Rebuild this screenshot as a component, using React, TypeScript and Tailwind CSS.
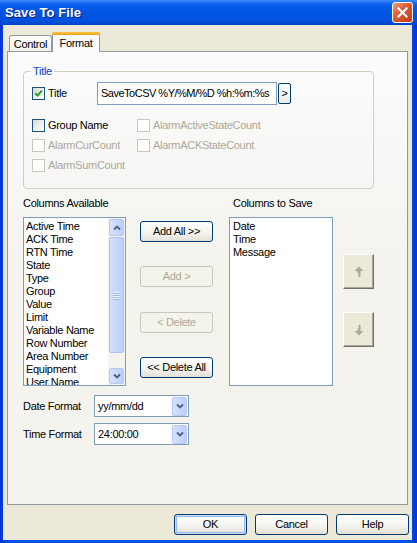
import React from 'react';
import clsx from 'clsx';

const availableCols = [
  'Active Time',
  'ACK Time',
  'RTN Time',
  'State',
  'Type',
  'Group',
  'Value',
  'Limit',
  'Variable Name',
  'Row Number',
  'Area Number',
  'Equipment',
  'User Name',
];

const savedCols = ['Date', 'Time', 'Message'];

function Check({ checked, disabled }: { checked?: boolean; disabled?: boolean }) {
  return (
    <span
      className={clsx(
        'w-[13px] h-[13px] border flex items-center justify-center shrink-0',
        disabled
          ? 'border-[#cac8bb] bg-white'
          : 'border-[#1c5180] bg-[linear-gradient(135deg,#d8d8d2,#f6f6f3_70%,#ffffff)]'
      )}
    >
      {checked && (
        <svg width="9" height="9" viewBox="0 0 9 9">
          <path d="M1.2 4.2 L3.6 6.6 L7.8 1.6" stroke="#21a121" strokeWidth="2" fill="none" />
        </svg>
      )}
    </span>
  );
}

function CheckRow({ label, checked, disabled }: { label: string; checked?: boolean; disabled?: boolean }) {
  return (
    <div className="flex items-center h-[20px]">
      <Check checked={checked} disabled={disabled} />
      <span className={clsx('ml-[3px] leading-[13px]', disabled ? 'text-[#aca899]' : 'text-black')}>{label}</span>
    </div>
  );
}

function XpButton({
  children,
  disabled,
  isDefault,
  className,
}: {
  children: React.ReactNode;
  disabled?: boolean;
  isDefault?: boolean;
  className?: string;
}) {
  return (
    <button
      type="button"
      className={clsx(
        'flex items-center justify-center h-[21px] rounded-[3px] border text-[11px] leading-[13px] tracking-[-0.3px]',
        disabled
          ? 'border-[#c9c7ba] text-[#aca899] bg-[#f5f4ea]'
          : 'border-[#003c74] text-black bg-[linear-gradient(to_bottom,#ffffff,#f4f4f0_55%,#e3e0d6)]',
        isDefault && 'shadow-[inset_0_0_0_1px_#cadcf8,inset_0_0_0_2px_#9ab9f0]',
        className
      )}
    >
      {children}
    </button>
  );
}

function Chevron({ up }: { up?: boolean }) {
  return (
    <svg width="8" height="6" viewBox="0 0 8 6">
      <path
        d={up ? 'M1 4.5 L4 1.5 L7 4.5' : 'M1 1.5 L4 4.5 L7 1.5'}
        stroke="#4d6185"
        strokeWidth="1.8"
        fill="none"
      />
    </svg>
  );
}

function ScrollBar() {
  return (
    <div className="w-[17px] h-full flex flex-col bg-[#f4f3ee]">
      <div className="h-[17px] mx-[1px] mt-[1px] rounded-[2px] border border-[#b4c8f6] bg-[linear-gradient(to_right,#d6e2fd,#bccefa)] flex items-center justify-center">
        <Chevron up />
      </div>
      <div className="h-[116px] mx-[1px] mt-[1px] rounded-[2px] border border-[#aec3f4] bg-[linear-gradient(to_right,#d2defd,#bed0fb)] flex flex-col items-center justify-center gap-[1px]">
        {[0, 1, 2, 3].map((i) => (
          <span key={i} className="w-[7px] h-[1px] bg-[#eef3fe] shadow-[0_1px_0_#9cb6ef]" />
        ))}
      </div>
      <div className="flex-1" />
      <div className="h-[16px] mx-[1px] mb-[1px] rounded-[2px] border border-[#b4c8f6] bg-[linear-gradient(to_right,#d6e2fd,#bccefa)] flex items-center justify-center">
        <Chevron />
      </div>
    </div>
  );
}

function Combo({ value }: { value: string }) {
  return (
    <div className="w-[95px] h-[22px] border border-[#7f9db9] bg-white flex items-center">
      <span className="flex-1 pl-[3px] leading-[13px]">{value}</span>
      <div className="w-[15px] h-[19px] mr-[1px] rounded-[2px] border border-[#b4c8f6] bg-[linear-gradient(to_right,#d6e2fd,#bccefa)] flex items-center justify-center">
        <Chevron />
      </div>
    </div>
  );
}

function MoveButton({ up }: { up?: boolean }) {
  return (
    <div className="w-[31px] h-[35px] bg-[#ece9d8] border border-t-white border-l-white border-r-[#716f64] border-b-[#716f64] shadow-[inset_-1px_-1px_0_#aca899] flex items-center justify-center">
      <svg width="10" height="12" viewBox="0 0 10 12">
        {up ? (
          <path d="M5 0.5 L9.5 5 L6.5 5 L6.5 11 L4.5 11 L4.5 7.5 L3.5 7.5 L3.5 5 L0.5 5 Z" fill="#aca899" />
        ) : (
          <path d="M5 11.5 L9.5 7 L6.5 7 L6.5 1 L4.5 1 L4.5 4.5 L3.5 4.5 L3.5 7 L0.5 7 Z" fill="#aca899" />
        )}
      </svg>
    </div>
  );
}

export default function App() {
  return (
    <div className="w-[417px] h-[543px] flex flex-col bg-[linear-gradient(to_right,#0831d9,#0054e3_2%,#0054e3_98%,#0831d9)] text-[11px] tracking-[-0.3px] text-black [font-family:'Liberation_Sans',Arial,sans-serif] overflow-hidden">
      {/* title bar */}
      <div className="h-[25px] shrink-0 flex items-center justify-between pl-[5px] pr-[4px] bg-[linear-gradient(to_bottom,#3d8af7,#0a5eea_18%,#0054e3_50%,#0050dc_85%,#0042c6)]">
        <span className="text-white font-bold text-[13px] leading-[16px] [text-shadow:1px_1px_0_#0a1e80] tracking-[0.1px]">
          Save To File
        </span>
        <div className="w-[21px] h-[21px] rounded-[3px] border border-white bg-[linear-gradient(135deg,#ee9a7d,#dc5a34_45%,#c2391a)] flex items-center justify-center">
          <svg width="11" height="11" viewBox="0 0 11 11">
            <path d="M1.5 1.5 L9.5 9.5 M9.5 1.5 L1.5 9.5" stroke="white" strokeWidth="2.2" strokeLinecap="square" />
          </svg>
        </div>
      </div>

      {/* client area */}
      <div className="flex-1 ml-[3px] mr-[5px] mb-[3px] bg-[#ece9d8] flex flex-col">
        {/* tabs */}
        <div className="mt-[7px] ml-[6px] h-[19px] flex items-end relative z-10">
          <div className="w-[43px] h-[16px] border border-b-0 border-[#919b9c] rounded-t-[3px] bg-[linear-gradient(to_bottom,#ffffff,#f1f0ea)] flex items-center justify-center leading-[13px] pt-[1px]">
            Control
          </div>
          <div className="w-[48px] h-[20px] -mb-[1px] border-x border-[#919b9c] rounded-t-[3px] bg-[#fcfcfe] flex flex-col">
            <div className="h-[3px] rounded-t-[2px] -mx-[1px] bg-[linear-gradient(to_bottom,#ffc83c,#e6a028)]" />
            <div className="flex-1 flex items-center justify-center leading-[13px]">Format</div>
          </div>
        </div>

        {/* tab panel */}
        <div className="ml-[4px] w-[401px] h-[454px] border border-[#919b9c] bg-[linear-gradient(to_bottom,#fcfcfe,#f4f3ee_45%,#f4f3ee)] pl-[15px] flex flex-col">
          {/* Title group */}
          <div className="mt-[19px] w-[351px] h-[118px] border border-[#d0d0bf] rounded-[4px] relative shrink-0">
            <span className="absolute -top-[7px] left-[7px] px-[2px] leading-[13px] text-[#0046d5] bg-[#fafaf9]">Title</span>
            <div className="mt-[10px] pl-[8px] flex items-center">
              <div className="w-[65px] flex items-center">
                <Check checked />
                <span className="ml-[3px] leading-[13px]">Title</span>
              </div>
              <div className="w-[180px] h-[23px] border border-[#7f9db9] bg-white flex items-center pl-[3px] whitespace-nowrap overflow-hidden tracking-[-0.5px]">
                SaveToCSV %Y/%M/%D %h:%m:%s
              </div>
              <div className="ml-[1px] w-[13px] h-[21px] rounded-[2px] border border-[#003c74] bg-[linear-gradient(to_bottom,#ffffff,#ecebe4)] flex items-center justify-center leading-[13px]">
                &gt;
              </div>
            </div>
            <div className="mt-[10px] pl-[8px] grid grid-cols-[105px_1fr]">
              <CheckRow label="Group Name" />
              <CheckRow label="AlarmActiveStateCount" disabled />
              <CheckRow label="AlarmCurCount" disabled />
              <CheckRow label="AlarmACKStateCount" disabled />
              <CheckRow label="AlarmSumCount" disabled />
            </div>
          </div>

          {/* column labels */}
          <div className="mt-[8px] h-[13px] flex leading-[13px]">
            <span className="w-[210px]">Columns Available</span>
            <span>Columns to Save</span>
          </div>

          {/* lists */}
          <div className="mt-[7px] h-[169px] flex">
            <div className="w-[103px] h-full border border-[#7f9db9] bg-white flex overflow-hidden">
              <div className="flex-1 pl-[2px] pt-[2px] leading-[13px] overflow-hidden">
                {availableCols.map((c) => (
                  <div key={c} className="h-[13px] whitespace-nowrap">
                    {c}
                  </div>
                ))}
              </div>
              <ScrollBar />
            </div>

            <div className="ml-[14px] w-[73px] flex flex-col">
              <XpButton className="mt-[4px]">Add All &gt;&gt;</XpButton>
              <XpButton className="mt-[24px]" disabled>
                Add &gt;
              </XpButton>
              <XpButton className="mt-[25px]" disabled>
                &lt; Delete
              </XpButton>
              <XpButton className="mt-[24px]">&lt;&lt; Delete All</XpButton>
            </div>

            <div className="ml-[16px] w-[104px] h-full border border-[#7f9db9] bg-white pl-[3px] pt-[2px] leading-[13px]">
              {savedCols.map((c) => (
                <div key={c} className="h-[13px]">
                  {c}
                </div>
              ))}
            </div>

            <div className="ml-[10px] flex flex-col">
              <div className="mt-[37px]">
                <MoveButton up />
              </div>
              <div className="mt-[23px]">
                <MoveButton />
              </div>
            </div>
          </div>

          {/* formats */}
          <div className="mt-[9px] flex items-center">
            <span className="w-[71px] leading-[13px]">Date Format</span>
            <Combo value="yy/mm/dd" />
          </div>
          <div className="mt-[6px] flex items-center">
            <span className="w-[71px] leading-[13px]">Time Format</span>
            <Combo value="24:00:00" />
          </div>
        </div>

        {/* dialog buttons */}
        <div className="mt-[9px] pr-[3px] flex justify-end gap-[8px]">
          <XpButton isDefault className="w-[73px]">
            OK
          </XpButton>
          <XpButton className="w-[73px]">Cancel</XpButton>
          <XpButton className="w-[73px]">Help</XpButton>
        </div>
      </div>
    </div>
  );
}
